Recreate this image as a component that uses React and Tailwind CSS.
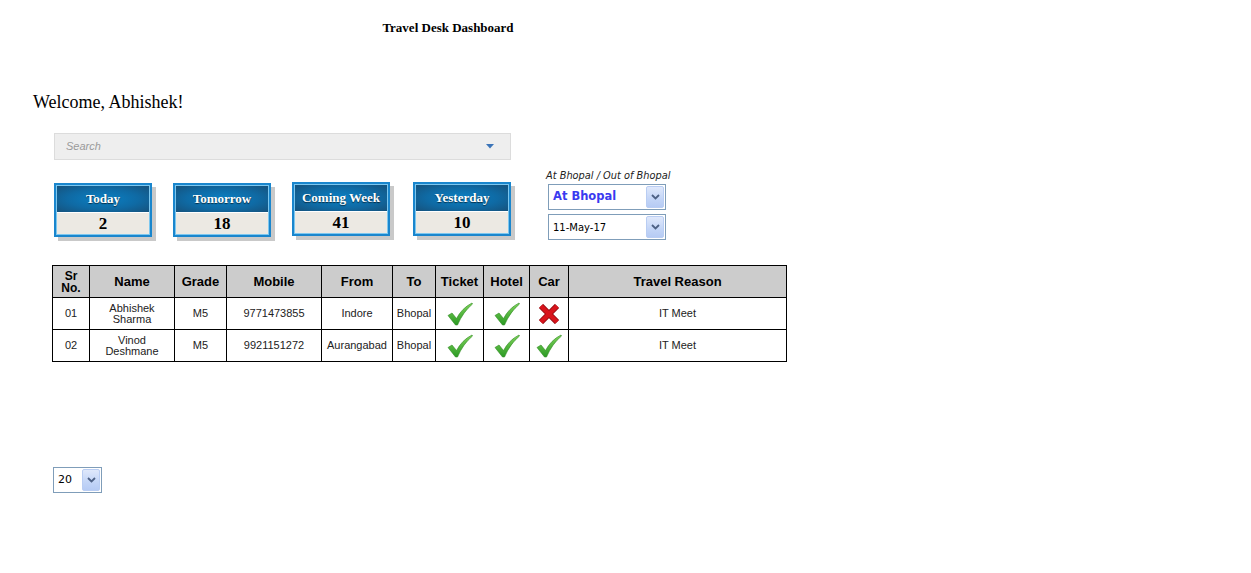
import React from "react";

const serif = { fontFamily: '"Liberation Serif", "Times New Roman", serif' };
const sans = { fontFamily: '"Liberation Sans", Arial, sans-serif' };
const tahoma = { fontFamily: '"DejaVu Sans", "Liberation Sans", sans-serif' };

function Card({ title, value }) {
  return (
    <div className="w-[98px] h-[54px] border-2 border-[#1a86cd] bg-[#7cc7ef] p-px shadow-[4px_4px_0_#c9c9c9] flex flex-col">
      <div
        className="h-[26px] flex items-center justify-center text-white font-bold text-[13px] bg-[radial-gradient(ellipse_at_center,#0a80c4_0%,#0f6aa4_55%,#16527c_100%)] [text-shadow:0_1px_1px_rgba(0,0,0,0.6)]"
        style={serif}
      >
        {title}
      </div>
      <div className="h-px bg-white" />
      <div
        className="flex-1 bg-[#ece9e3] flex items-center justify-center font-bold text-[17px] text-black leading-none"
        style={serif}
      >
        {value}
      </div>
    </div>
  );
}

function Chevron() {
  return (
    <svg width="9" height="6" viewBox="0 0 9 6">
      <path d="M1 1 L4.5 4.5 L8 1" fill="none" stroke="#4d6185" strokeWidth="1.8" />
    </svg>
  );
}

function Select({ value, className = "", textClass = "", width = "w-[118px]" }) {
  return (
    <div className={`${width} h-[26px] border border-[#7f9db9] bg-white flex items-center justify-between pl-[4px] pr-[1px] ${className}`}>
      <span className={textClass} style={tahoma}>{value}</span>
      <div className="w-[18px] h-[22px] rounded-[2px] border border-[#b9cdf3] bg-[linear-gradient(180deg,#dfe8fb_0%,#c3d5f7_60%,#b6cbf4_100%)] flex items-center justify-center">
        <Chevron />
      </div>
    </div>
  );
}

function Check() {
  return (
    <svg width="26" height="24" viewBox="0 0 26 24" className="inline-block">
      <defs>
        <linearGradient id="cg" x1="0" y1="0" x2="0" y2="1">
          <stop offset="0" stopColor="#7fd35a" />
          <stop offset="1" stopColor="#2b9a24" />
        </linearGradient>
      </defs>
      <path
        d="M1 13.5 L5 11 L9.5 16.5 Q15 6 25 1 L25.5 2 Q16 10 10.5 23 L8.5 23 Z"
        fill="url(#cg)"
        stroke="#2f8a22"
        strokeWidth="0.6"
      />
    </svg>
  );
}

function Cross() {
  return (
    <svg width="22" height="20" viewBox="0 0 22 20" className="inline-block">
      <path d="M3 2 L19 18 M19 2 L3 18" stroke="#8e0a0f" strokeWidth="6" />
      <path d="M3 2 L19 18 M19 2 L3 18" stroke="#d8141c" strokeWidth="4.4" />
    </svg>
  );
}

const cols = [
  { h: "Sr No.", w: "w-[37px]" },
  { h: "Name", w: "w-[85px]" },
  { h: "Grade", w: "w-[52px]" },
  { h: "Mobile", w: "w-[95px]" },
  { h: "From", w: "w-[71px]" },
  { h: "To", w: "w-[43px]" },
  { h: "Ticket", w: "w-[48px]" },
  { h: "Hotel", w: "w-[46px]" },
  { h: "Car", w: "w-[39px]" },
  { h: "Travel Reason", w: "w-[218px]" },
];

const rows = [
  { sr: "01", name: ["Abhishek", "Sharma"], grade: "M5", mobile: "9771473855", from: "Indore", to: "Bhopal", ticket: true, hotel: true, car: false, reason: "IT Meet" },
  { sr: "02", name: ["Vinod", "Deshmane"], grade: "M5", mobile: "9921151272", from: "Aurangabad", to: "Bhopal", ticket: true, hotel: true, car: true, reason: "IT Meet" },
];

export default function App() {
  return (
    <div className="w-[1251px] h-[573px] bg-white text-black overflow-hidden">
      <div className="w-[896px] pt-[20px] text-center text-[13px] font-bold leading-[16px]" style={serif}>
        Travel Desk Dashboard
      </div>

      <div className="ml-[33px] mt-[55px] text-[18px] leading-[22px]" style={serif}>
        Welcome, Abhishek!
      </div>

      <div className="ml-[54px] mt-[20px] w-[457px] h-[27px] bg-[#eeeeee] border border-[#dcdcdc] flex items-center justify-between pl-[11px] pr-[16px]">
        <span className="italic text-[11px] text-[#9a9a9a]" style={sans}>Search</span>
        <svg width="8" height="5" viewBox="0 0 8 5">
          <path d="M0 0 L8 0 L4 4.5 Z" fill="#3b74b8" />
        </svg>
      </div>

      <div className="flex items-start mt-[8px]">
        <div className="ml-[54px] mt-[14px] flex items-start">
          <div className="mt-px"><Card title="Today" value="2" /></div>
          <div className="mt-px ml-[21px]"><Card title="Tomorrow" value="18" /></div>
          <div className="ml-[21px]"><Card title="Coming Week" value="41" /></div>
          <div className="ml-[23px]"><Card title="Yesterday" value="10" /></div>
        </div>
        <div className="ml-[37px] flex flex-col">
          <div className="italic text-[9.8px] leading-[14px] text-[#222] -ml-[2px] mt-px" style={tahoma}>
            At Bhopal / Out of Bhopal
          </div>
          <Select value="At Bhopal" className="mt-[1px]" textClass="text-[11.5px] font-bold text-[#3a3af0]" />
          <Select value="11-May-17" className="mt-[4px]" textClass="text-[10px] text-black" />
        </div>
      </div>

      <table className="ml-[52px] mt-[25px] border-collapse table-fixed" style={sans}>
        <thead>
          <tr className="h-[32px] bg-[#cccccc]">
            {cols.map((c) => (
              <th
                key={c.h}
                className={`${c.w} border border-black font-bold p-0 ${c.h === "Sr No." ? "text-[12px] leading-[12px]" : "text-[13px] leading-[14px]"}`}
              >
                {c.h === "Sr No." ? (
                  <span className="block">Sr<br />No.</span>
                ) : (
                  c.h
                )}
              </th>
            ))}
          </tr>
        </thead>
        <tbody className="text-[11px] text-[#222]">
          {rows.map((r) => (
            <tr key={r.sr} className="h-[32px] text-center">
              <td className="border border-black p-0">{r.sr}</td>
              <td className="border border-black p-0 leading-[11px]">
                {r.name[0]}
                <br />
                {r.name[1]}
              </td>
              <td className="border border-black p-0">{r.grade}</td>
              <td className="border border-black p-0">{r.mobile}</td>
              <td className="border border-black p-0">{r.from}</td>
              <td className="border border-black p-0">{r.to}</td>
              <td className="border border-black p-0 align-middle">
                <div className="flex justify-center">{r.ticket ? <Check /> : <Cross />}</div>
              </td>
              <td className="border border-black p-0 align-middle">
                <div className="flex justify-center">{r.hotel ? <Check /> : <Cross />}</div>
              </td>
              <td className="border border-black p-0 align-middle">
                <div className="flex justify-center">{r.car ? <Check /> : <Cross />}</div>
              </td>
              <td className="border border-black p-0">{r.reason}</td>
            </tr>
          ))}
        </tbody>
      </table>

      <div className="ml-[53px] mt-[105px]">
        <Select value="20" width="w-[49px]" textClass="text-[11px] text-black" />
      </div>
    </div>
  );
}
